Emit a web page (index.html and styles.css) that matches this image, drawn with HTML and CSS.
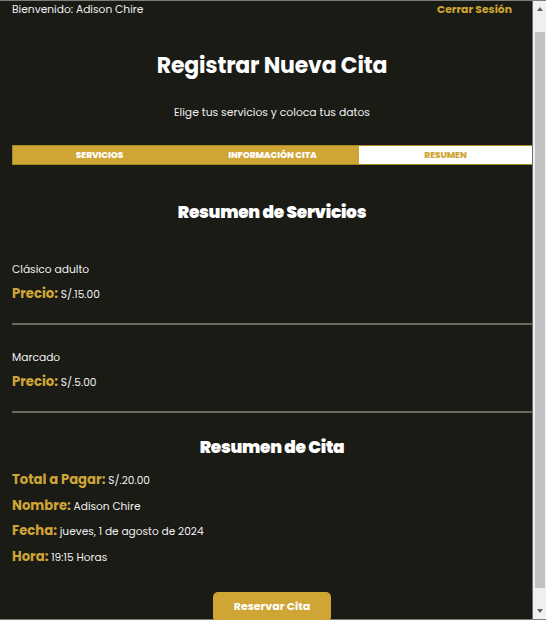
FILE: index.html
```html
<!DOCTYPE html>
<html lang="es">
<head>
<meta charset="utf-8">
<title>Registrar Nueva Cita</title>
<link rel="stylesheet" href="styles.css">
</head>
<body>
<div class="window">
  <main class="page">
    <header class="topbar">
      <span class="welcome">Bienvenido: Adison Chire</span>
      <a class="logout" href="#">Cerrar Sesión</a>
    </header>
    <h1 class="title">Registrar Nueva Cita</h1>
    <p class="lead">Elige tus servicios y coloca tus datos</p>
    <nav class="tabs">
      <button class="tab">Servicios</button>
      <button class="tab">Información Cita</button>
      <button class="tab tab-active">Resumen</button>
    </nav>
    <section class="summary">
      <h2 class="heading heading-services">Resumen de Servicios</h2>
      <div class="service service-first">
        <p class="service-name">Clásico adulto</p>
        <p class="row row-price"><span class="label">Precio:</span> S/.15.00</p>
      </div>
      <hr class="sep">
      <div class="service">
        <p class="service-name">Marcado</p>
        <p class="row row-price"><span class="label">Precio:</span> S/.5.00</p>
      </div>
      <hr class="sep">
      <h2 class="heading heading-cita">Resumen de Cita</h2>
      <p class="row row-total"><span class="label">Total a Pagar:</span> S/.20.00</p>
      <p class="row row-info"><span class="label">Nombre:</span> Adison Chire</p>
      <p class="row row-info"><span class="label">Fecha:</span> jueves, 1 de agosto de 2024</p>
      <p class="row row-info"><span class="label">Hora:</span> 19:15 Horas</p>
      <div class="actions">
        <button class="btn-reserve">Reservar Cita</button>
      </div>
    </section>
  </main>
  <div class="scrollbar">
    <span class="arrow arrow-up"></span>
    <div class="track"><div class="thumb"></div></div>
    <span class="arrow arrow-down"></span>
  </div>
</div>
</body>
</html>
```
FILE: styles.css
```css
* { box-sizing: border-box; }
html, body {
  margin: 0;
  padding: 0;
  height: 620px;
  overflow: hidden;
  background: #1b1b16;
}
body {
  font-family: "Poppins", "Inter", "Open Sans", sans-serif;
  color: #f2f2f2;
}
.window {
  display: flex;
  height: 620px;
  border-top: 1px solid #7c7c78;
  border-bottom: 1px solid #7c7c78;
}
.page {
  flex: 1;
  display: flex;
  flex-direction: column;
  padding-left: 12px;
  background: #1b1b16;
  border-right: 1px solid #6c6c68;
}
.topbar {
  display: flex;
  justify-content: space-between;
  align-items: center;
  height: 18px;
  padding-top: 1px;
  padding-right: 20px;
}
.welcome {
  font-size: 10.7px;
  color: #f0f0f0;
}
.logout {
  font-size: 10.8px;
  font-weight: 700;
  color: #cfa535;
  text-decoration: none;
}
.title {
  margin: 33px 0 0;
  font-size: 22px;
  line-height: 30px;
  font-weight: 700;
  text-align: center;
  color: #ffffff;
  letter-spacing: -0.2px;
}
.lead {
  margin: 22px 0 0;
  font-size: 10.8px;
  line-height: 20px;
  text-align: center;
  color: #f0f0f0;
}
.tabs {
  margin-top: 22px;
  display: grid;
  grid-template-columns: 1fr 1fr 1fr;
  height: 20px;
  background: #cfa535;
  border: 1px solid #a98826;
  border-right: 0;
}
.tab {
  border: 0;
  background: transparent;
  font-family: inherit;
  font-size: 9px;
  font-weight: 800;
  text-transform: uppercase;
  color: #ffffff;
  padding: 0;
  line-height: 18px;
  letter-spacing: -0.1px;
}
.tab-active {
  background: #ffffff;
  color: #cfa535;
}
.summary {
  display: flex;
  flex-direction: column;
}
.heading {
  margin: 0;
  font-size: 17px;
  line-height: 26px;
  font-weight: 900;
  text-align: center;
  color: #ffffff;
  letter-spacing: -0.3px;
}
.heading-services { margin-top: 34px; }
.heading-cita { margin-top: 21px; }
.service { display: flex; flex-direction: column; margin-top: 23px; }
.service-first { margin-top: 35px; }
.service-name {
  margin: 0;
  font-size: 10.7px;
  line-height: 20px;
  color: #f0f0f0;
}
.row {
  margin: 0;
  height: 20px;
  font-size: 10.6px;
  line-height: 20px;
  color: #f0f0f0;
}
.row-price { margin-top: 5px; }
.row-total { margin-top: 11px; }
.row-info { margin-top: 5.5px; }
.label {
  font-size: 13.2px;
  line-height: 14px;
  font-weight: 700;
  color: #cfa535;
}
.sep {
  margin: 18px 0 0;
  height: 2px;
  border: 0;
  background: #6a6a62;
}
.actions {
  display: flex;
  justify-content: center;
  margin-top: 24px;
}
.btn-reserve {
  width: 118px;
  height: 30px;
  border: 0;
  border-radius: 5px;
  background: #cfa535;
  color: #ffffff;
  font-family: inherit;
  font-size: 11px;
  font-weight: 700;
  padding: 0;
}
.scrollbar {
  width: 13px;
  display: flex;
  flex-direction: column;
  align-items: center;
  background: #f0f0f0;
}
.arrow {
  width: 0;
  height: 0;
  border-left: 3.5px solid transparent;
  border-right: 3.5px solid transparent;
  margin: 6px 0;
}
.arrow-up { border-bottom: 4px solid #606060; }
.arrow-down { border-top: 4px solid #606060; }
.track {
  flex: 1;
  width: 100%;
  display: flex;
  justify-content: center;
  padding-top: 15px;
}
.thumb {
  width: 10px;
  height: 556px;
  background: #c1c1c1;
}
```
